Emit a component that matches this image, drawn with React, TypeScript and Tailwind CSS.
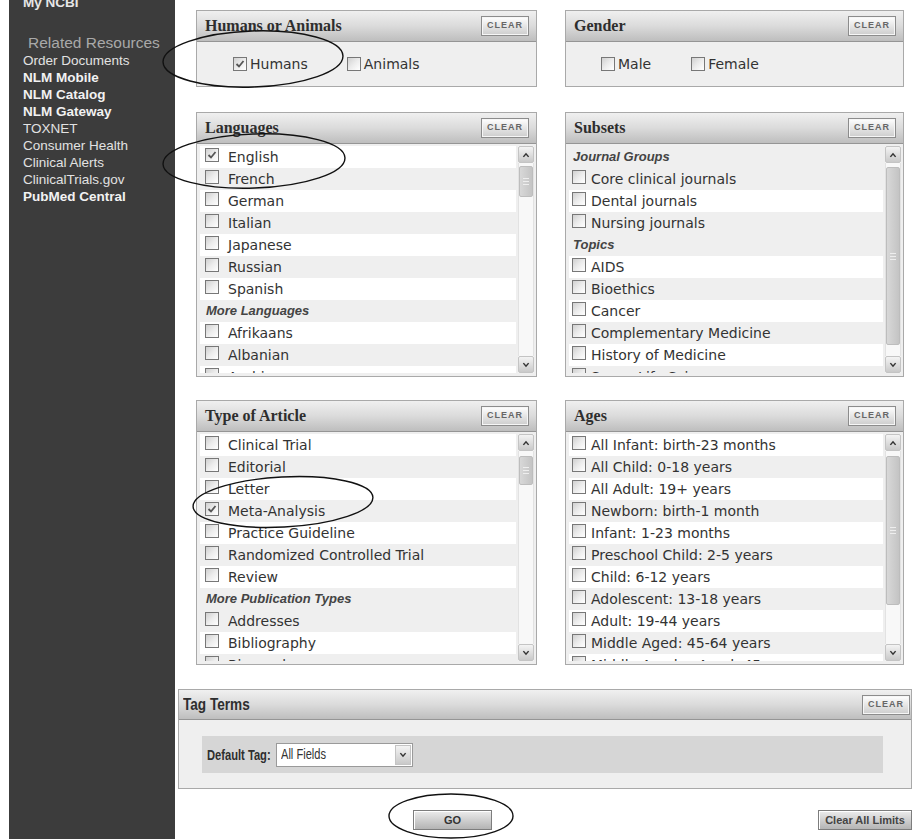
import type { ReactNode } from 'react';

interface Row {
  label: string;
  checked?: boolean;
  heading?: boolean;
  white?: boolean;
}

const RESOURCES: { label: string; strong?: boolean }[] = [
  { label: 'Order Documents' },
  { label: 'NLM Mobile', strong: true },
  { label: 'NLM Catalog', strong: true },
  { label: 'NLM Gateway', strong: true },
  { label: 'TOXNET' },
  { label: 'Consumer Health' },
  { label: 'Clinical Alerts' },
  { label: 'ClinicalTrials.gov' },
  { label: 'PubMed Central', strong: true },
];

const LANGUAGES: Row[] = [
  { label: 'English', checked: true, white: true },
  { label: 'French' },
  { label: 'German', white: true },
  { label: 'Italian' },
  { label: 'Japanese', white: true },
  { label: 'Russian' },
  { label: 'Spanish', white: true },
  { label: 'More Languages', heading: true },
  { label: 'Afrikaans', white: true },
  { label: 'Albanian' },
  { label: 'Arabic', white: true },
  { label: 'Armenian' },
];

const SUBSETS: Row[] = [
  { label: 'Journal Groups', heading: true },
  { label: 'Core clinical journals' },
  { label: 'Dental journals', white: true },
  { label: 'Nursing journals' },
  { label: 'Topics', heading: true },
  { label: 'AIDS', white: true },
  { label: 'Bioethics' },
  { label: 'Cancer', white: true },
  { label: 'Complementary Medicine' },
  { label: 'History of Medicine', white: true },
  { label: 'Space Life Sciences' },
  { label: 'Systematic Reviews', white: true },
];

const ARTICLE_TYPES: Row[] = [
  { label: 'Clinical Trial', white: true },
  { label: 'Editorial' },
  { label: 'Letter', white: true },
  { label: 'Meta-Analysis', checked: true },
  { label: 'Practice Guideline', white: true },
  { label: 'Randomized Controlled Trial' },
  { label: 'Review', white: true },
  { label: 'More Publication Types', heading: true },
  { label: 'Addresses' },
  { label: 'Bibliography', white: true },
  { label: 'Biography' },
  { label: 'Case Reports', white: true },
];

const AGES: Row[] = [
  'All Infant: birth-23 months',
  'All Child: 0-18 years',
  'All Adult: 19+ years',
  'Newborn: birth-1 month',
  'Infant: 1-23 months',
  'Preschool Child: 2-5 years',
  'Child: 6-12 years',
  'Adolescent: 13-18 years',
  'Adult: 19-44 years',
  'Middle Aged: 45-64 years',
  'Middle Aged + Aged: 45+ years',
  'Aged: 65+ years',
].map((label, i) => ({ label, white: i % 2 === 0 }));

function Checkbox({ checked }: { checked?: boolean }) {
  return (
    <span className="relative inline-block h-[14px] w-[14px] shrink-0 border border-[#777] bg-linear-to-br from-[#d0d0d0] via-[#ececec] to-white">
      {checked && (
        <svg viewBox="0 0 12 12" className="absolute inset-0 h-full w-full">
          <polyline points="2.5,6 5,8.5 9.5,3" fill="none" stroke="#555" strokeWidth="1.8" />
        </svg>
      )}
    </span>
  );
}

function ClearButton() {
  return (
    <button className="h-[20px] w-[48px] border border-[#8c8c8c] bg-linear-to-b from-white to-[#cdcdcd] font-['Liberation_Sans'] text-[9px] font-bold tracking-[1px] text-[#666] shadow-[inset_0_0_0_1px_#f6f6f6]">
      CLEAR
    </button>
  );
}

// condensed label, squeezed like Arial Narrow
function Narrow({ children, className, squeeze }: { children: ReactNode; className: string; squeeze: string }) {
  return (
    <span className={`inline-block whitespace-nowrap ${className}`}>
      <span className={`inline-block origin-left ${squeeze}`}>{children}</span>
    </span>
  );
}

function Panel({ title, children, className }: { title: string; children: ReactNode; className: string }) {
  return (
    <section className={`flex flex-col border border-[#a9a9a9] bg-[#efefef] ${className}`}>
      <header className="flex h-[31px] shrink-0 items-center justify-between border-b border-[#959595] bg-linear-to-b from-[#f0f0f0] via-[#dbdbdb] to-[#bebebe] pl-[8px] pr-[7px]">
        <h2 className="font-['Liberation_Serif'] text-[16px] font-bold text-[#2e2e2e]">{title}</h2>
        <ClearButton />
      </header>
      {children}
    </section>
  );
}

function Arrow({ up }: { up?: boolean }) {
  return (
    <div className="flex h-[17px] shrink-0 items-center justify-center rounded-[2px] border border-[#c4c4c4] bg-linear-to-b from-[#f4f4f4] to-[#c9c9c9]">
      <svg viewBox="0 0 10 8" className="h-[6px] w-[8px]">
        <polyline
          points={up ? '1.5,6.5 5,2.5 8.5,6.5' : '1.5,1.5 5,5.5 8.5,1.5'}
          fill="none"
          stroke="#333"
          strokeWidth="2"
        />
      </svg>
    </div>
  );
}

function Scrollbar({ thumb }: { thumb: string }) {
  return (
    <div className="ml-[2px] flex w-[16px] shrink-0 flex-col bg-[#f8f8f8]">
      <Arrow up />
      <div className="flex flex-1 flex-col border-x border-[#e2e2e2]">
        <div className={`flex flex-col items-center justify-center gap-[2px] rounded-[2px] border border-[#bdbdbd] bg-linear-to-r from-[#d8d8d8] to-[#c4c4c4] ${thumb}`}>
          <span className="h-px w-[6px] bg-[#eee]" />
          <span className="h-px w-[6px] bg-[#eee]" />
          <span className="h-px w-[6px] bg-[#eee]" />
        </div>
      </div>
      <Arrow />
    </div>
  );
}

function ScrollList({ rows, tight, thumb }: { rows: Row[]; tight?: boolean; thumb: string }) {
  return (
    <div className="flex min-h-0 flex-1 pl-[3px] pr-[2px] pb-[3px] pt-[2px]">
      <div className="min-w-0 flex-1 overflow-hidden">
        {rows.map((row) => (
          <div
            key={row.label}
            className={`flex h-[22px] items-center whitespace-nowrap ${row.white ? 'bg-white' : 'bg-[#efefef]'}`}
          >
            {row.heading ? (
              <span className={`font-['Liberation_Sans'] text-[13px] font-bold italic text-[#444] ${tight ? 'pl-[4px]' : 'pl-[6px]'}`}>
                {row.label}
              </span>
            ) : (
              <>
                <span className={tight ? 'ml-[3px]' : 'ml-[5px]'}>
                  <Checkbox checked={row.checked} />
                </span>
                <span className={`text-[14px] text-[#333] ${tight ? 'ml-[5px]' : 'ml-[9px]'}`}>{row.label}</span>
              </>
            )}
          </div>
        ))}
      </div>
      <Scrollbar thumb={thumb} />
    </div>
  );
}

function Option({ label, checked }: { label: string; checked?: boolean }) {
  return (
    <label className="flex items-center gap-[3px] text-[14px] text-[#333]">
      <Checkbox checked={checked} />
      {label}
    </label>
  );
}

function Sidebar() {
  return (
    <aside className="ml-[9px] w-[166px] shrink-0 overflow-hidden bg-[#3c3c3c] font-['Liberation_Sans'] text-[13.5px] leading-[17px]">
      <div className="-mt-[6px] pl-[14px] font-bold text-[#e6e6e6]">My NCBI</div>
      <div className="mt-[23px] pl-[19px] text-[15.5px] leading-[18px] text-[#a9a9a9]">Related Resources</div>
      <ul className="pl-[14px]">
        {RESOURCES.map((r) => (
          <li key={r.label} className={r.strong ? 'font-bold text-[#f2f2f2]' : 'text-[#e2e2e2]'}>
            {r.label}
          </li>
        ))}
      </ul>
    </aside>
  );
}

export default function App() {
  return (
    <div className="relative flex min-h-screen bg-white font-['DejaVu_Sans']">
      <Sidebar />

      <main className="w-[740px] shrink-0 pt-[10px]">
        <div className="ml-[21px] flex gap-[28px]">
          <Panel title="Humans or Animals" className="h-[77px] w-[341px]">
            <div className="flex flex-1 items-center gap-[39px] pl-[36px]">
              <Option label="Humans" checked />
              <Option label="Animals" />
            </div>
          </Panel>
          <Panel title="Gender" className="h-[77px] w-[339px]">
            <div className="flex flex-1 items-center gap-[40px] pl-[35px]">
              <Option label="Male" />
              <Option label="Female" />
            </div>
          </Panel>
        </div>

        <div className="ml-[21px] mt-[25px] flex gap-[28px]">
          <Panel title="Languages" className="h-[265px] w-[341px]">
            <ScrollList rows={LANGUAGES} thumb="mt-[3px] h-[31px]" />
          </Panel>
          <Panel title="Subsets" className="h-[265px] w-[339px]">
            <ScrollList rows={SUBSETS} tight thumb="mt-[4px] h-[178px]" />
          </Panel>
        </div>

        <div className="ml-[21px] mt-[23px] flex gap-[28px]">
          <Panel title="Type of Article" className="h-[265px] w-[341px]">
            <ScrollList rows={ARTICLE_TYPES} thumb="mt-[5px] h-[29px]" />
          </Panel>
          <Panel title="Ages" className="h-[265px] w-[339px]">
            <ScrollList rows={AGES} tight thumb="mt-[5px] h-[149px]" />
          </Panel>
        </div>

        <section className="ml-[3px] mt-[24px] flex h-[100px] w-[734px] flex-col border border-[#a9a9a9] bg-[#efefef]">
          <header className="flex h-[30px] shrink-0 items-center justify-between border-b border-[#959595] bg-linear-to-b from-[#f0f0f0] via-[#dbdbdb] to-[#bebebe] pl-[4px] pr-[1px]">
            <h2 className="font-['Liberation_Sans'] text-[17px] font-bold text-[#2e2e2e]">
              <Narrow className="w-[70px]" squeeze="scale-x-[0.8]">Tag Terms</Narrow>
            </h2>
            <ClearButton />
          </header>
          <div className="ml-[23px] mt-[16px] flex h-[37px] w-[681px] items-center bg-[#d6d6d6] pl-[5px] font-['Liberation_Sans']">
            <Narrow className="w-[67px] text-[15.5px] font-bold text-[#2e2e2e]" squeeze="scale-x-[0.72]">
              Default Tag:
            </Narrow>
            <div className="ml-[2px] flex h-[24px] w-[137px] items-center border border-[#9a9a9a] bg-white">
              <Narrow className="flex-1 pl-[4px] text-[15px] text-[#333]" squeeze="scale-x-[0.74]">
                All Fields
              </Narrow>
              <div className="mr-[1px] flex h-[20px] w-[16px] items-center justify-center border border-[#c4c4c4] bg-linear-to-b from-[#f4f4f4] to-[#c9c9c9]">
                <svg viewBox="0 0 10 8" className="h-[6px] w-[8px]">
                  <polyline points="1.5,1.5 5,5.5 8.5,1.5" fill="none" stroke="#333" strokeWidth="2" />
                </svg>
              </div>
            </div>
          </div>
        </section>

        <div className="mt-[21px] flex items-center pr-[3px]">
          <button className="ml-[238px] h-[20px] w-[79px] border border-[#7d7d7d] bg-linear-to-b from-[#ececec] to-[#b4b4b4] font-['Liberation_Sans'] text-[11px] font-bold text-[#333] shadow-[inset_1px_1px_0_#fff]">
            GO
          </button>
          <button className="ml-auto h-[20px] w-[94px] border border-[#7d7d7d] bg-linear-to-b from-[#ececec] to-[#b4b4b4] font-['Liberation_Sans'] text-[11px] font-bold text-[#444] shadow-[inset_1px_1px_0_#fff]">
            Clear All Limits
          </button>
        </div>
      </main>

      {/* hand-drawn rings around the chosen limits */}
      <svg className="pointer-events-none absolute left-0 top-0 h-[839px] w-[915px]" viewBox="0 0 915 839">
        <g fill="none" stroke="#111" strokeWidth="1.4">
          <ellipse cx="253" cy="59" rx="90" ry="28" transform="rotate(-2 253 59)" />
          <ellipse cx="254" cy="161" rx="91" ry="27" transform="rotate(-2 254 161)" />
          <ellipse cx="283" cy="502" rx="90" ry="25" transform="rotate(-3 283 502)" />
          <ellipse cx="451" cy="816" rx="62" ry="22" />
        </g>
      </svg>
    </div>
  );
}
